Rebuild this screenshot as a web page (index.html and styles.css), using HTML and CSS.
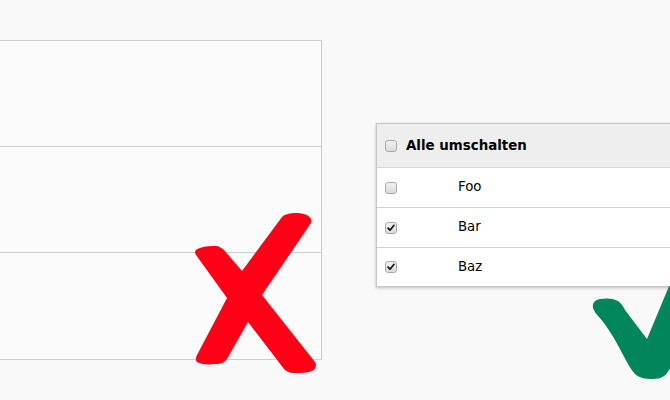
FILE: index.html
```html
<!DOCTYPE html>
<html lang="de">
<head>
<meta charset="utf-8">
<title>Checkbox-Tabelle</title>
<link rel="stylesheet" href="styles.css">
</head>
<body>
<div class="scene">
  <div class="table-bad">
    <div class="bad-row"></div>
    <div class="bad-row"></div>
    <div class="bad-row"></div>
  </div>
  <div class="table-good">
    <div class="row head">
      <span class="cb"></span>
      <span class="head-label">Alle umschalten</span>
    </div>
    <div class="row">
      <span class="cb-cell"><span class="cb"></span></span>
      <span class="name">Foo</span>
    </div>
    <div class="row">
      <span class="cb-cell"><span class="cb checked"><svg viewBox="0 0 12 12"><path d="M2.5 6.2 L4.8 8.6 L9.6 2.8" /></svg></span></span>
      <span class="name">Bar</span>
    </div>
    <div class="row last">
      <span class="cb-cell"><span class="cb checked"><svg viewBox="0 0 12 12"><path d="M2.5 6.2 L4.8 8.6 L9.6 2.8" /></svg></span></span>
      <span class="name">Baz</span>
    </div>
  </div>
  <svg class="mark-x" viewBox="0 0 130 175" width="130" height="175">
    <path d="M92 12 C95 9 100 8 106 8 C113 8 119 10 121 14 C122 16 121 18 119 21
             L72 90
             L125 157 C127 160 126 164 122 166 C117 168 110 168 104 168 C99 168 96 166 94 164
             L58 117
             L37 154 C35 157 31 159 25 159 C17 160 10 159 7 157 C5 155 6 152 7 150
             L37 93
             L6 50 C4 47 5 44 10 43 C15 41 22 41 27 41 C30 42 32 43 34 45
             L52 66 Z" />
  </svg>
  <svg class="mark-check" viewBox="0 0 120 100" width="120" height="100">
    <path d="M8 22 C7 17 10 14 15 13 C21 12 28 12 33 15 C36 17 38 20 40 24
             L62 53
             L82 5 L86 -5 L120 -5 L120 20
             L84 84 C81 90 76 93 68 93 C60 93 54 92 50 88 C46 84 42 76 37 67
             C30 53 22 40 14 31 C11 28 9 25 8 22 Z" />
  </svg>
</div>
</body>
</html>
```

FILE: styles.css
```css
html, body {
  margin: 0;
  padding: 0;
  background: #f9f9f9;
}

body {
  font-family: "DejaVu Sans", Verdana, sans-serif;
  font-size: 13.3px;
  color: #000;
}

.scene {
  position: relative;
  width: 670px;
  height: 400px;
  overflow: hidden;
  display: flex;
  align-items: flex-start;
}

.table-bad {
  flex: none;
  margin-top: 40px;
  width: 321px;
  border: 1px solid #cccccc;
  border-left: none;
  background: #fbfbfb;
}

.bad-row {
  height: 105px;
  border-bottom: 1px solid #cccccc;
}

.bad-row:last-child {
  height: 106px;
  border-bottom: none;
}

.table-good {
  flex: none;
  margin-top: 123px;
  margin-left: 54px;
  width: 330px;
  background: #ffffff;
  border: 1px solid #c6c6c6;
  box-shadow: 0 1px 3px rgba(0, 0, 0, 0.25);
}

.row {
  display: flex;
  align-items: center;
  height: 39px;
  border-bottom: 1px solid #d2d2d2;
}

.row.last {
  height: 38px;
  border-bottom: none;
}

.row.head {
  height: 43px;
  background: #eeeeee;
  padding-left: 8px;
  gap: 9px;
  border-bottom: 1px solid #d6d6d6;
}

.head-label {
  font-weight: bold;
  font-size: 13.4px;
}

.cb-cell {
  flex: none;
  width: 81px;
  box-sizing: border-box;
  padding-left: 8px;
  display: flex;
  align-items: center;
}

.name {
  font-size: 13.3px;
  line-height: 1;
  padding-bottom: 1px;
}

.cb {
  flex: none;
  width: 12px;
  height: 12px;
  box-sizing: border-box;
  border: 1px solid #a9a9a9;
  border-radius: 3px;
  background: linear-gradient(#f2f2f2, #d9d9d9);
  display: flex;
  align-items: center;
  justify-content: center;
}

.cb svg {
  width: 10px;
  height: 10px;
}

.cb svg path {
  fill: none;
  stroke: #111;
  stroke-width: 2;
  stroke-linecap: round;
  stroke-linejoin: round;
}

.mark-x {
  position: absolute;
  left: 190px;
  top: 205px;
}

.mark-x path {
  fill: #ff0016;
}

.mark-check {
  position: absolute;
  left: 585px;
  top: 286px;
}

.mark-check path {
  fill: #00865a;
}
```
